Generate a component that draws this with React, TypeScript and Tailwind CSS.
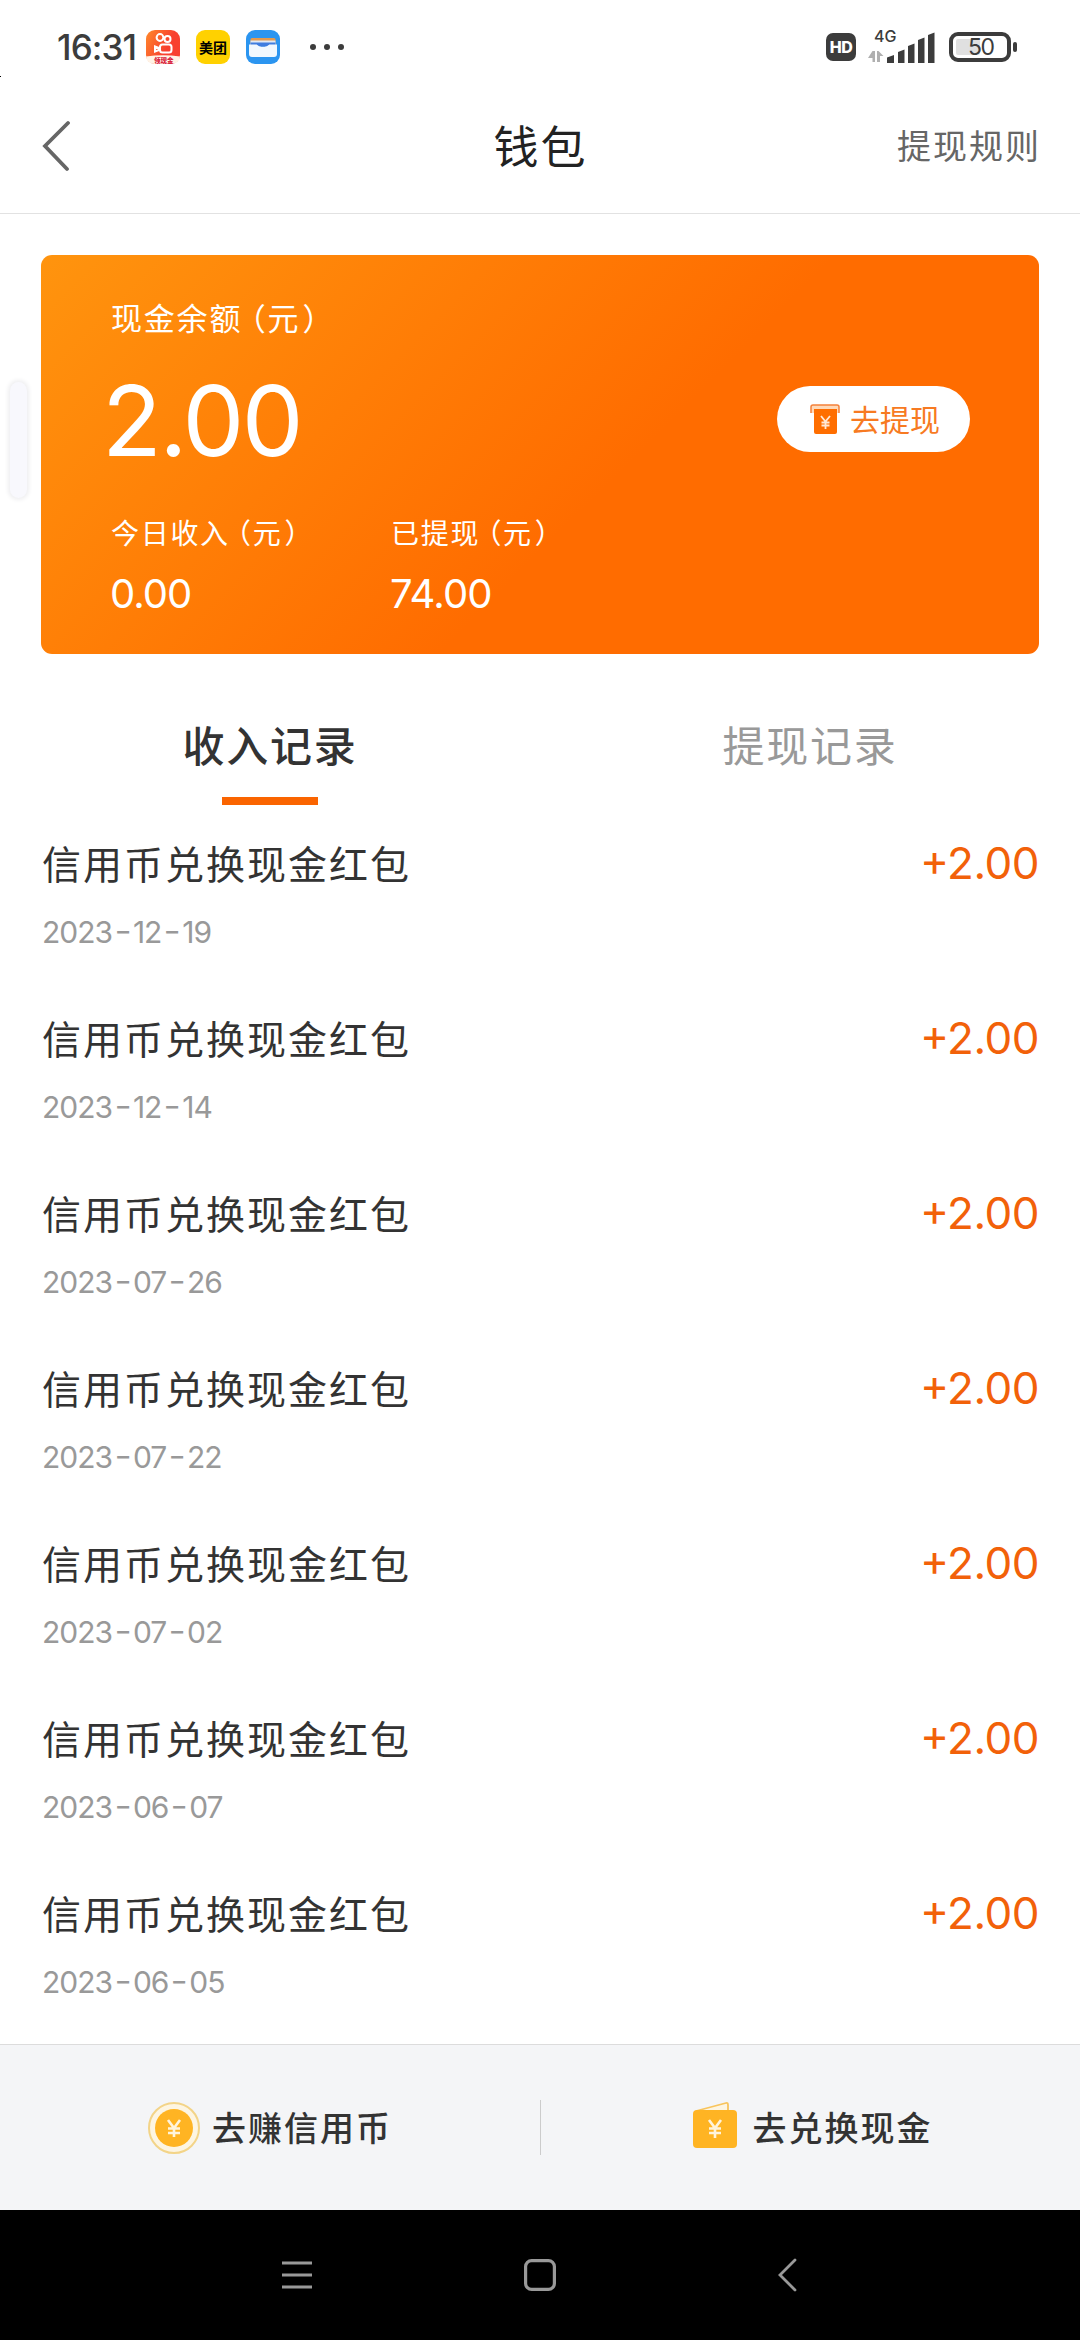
import { useState } from "react";

const records = [
  { id: 1, title: "信用币兑换现金红包", date: "2023-12-19", amount: "+2.00" },
  { id: 2, title: "信用币兑换现金红包", date: "2023-12-14", amount: "+2.00" },
  { id: 3, title: "信用币兑换现金红包", date: "2023-07-26", amount: "+2.00" },
  { id: 4, title: "信用币兑换现金红包", date: "2023-07-22", amount: "+2.00" },
  { id: 5, title: "信用币兑换现金红包", date: "2023-07-02", amount: "+2.00" },
  { id: 6, title: "信用币兑换现金红包", date: "2023-06-07", amount: "+2.00" },
  { id: 7, title: "信用币兑换现金红包", date: "2023-06-05", amount: "+2.00" },
];

function StatusBar() {
  return (
    <div className="flex h-[79px] items-start justify-between pl-[57px] pr-[63px] pt-[30px] text-[#3c3c3c]">
      <div className="flex items-center">
        <span className="w-[89px] font-[Inter,sans-serif] text-[35px] font-medium leading-[34px] tracking-[-0.900px]">16:31</span>
        <svg className="mr-4" width="34" height="34" viewBox="0 0 34 34">
          <defs>
            <linearGradient id="ks" x1="0" y1="0" x2="1" y2="0.5">
              <stop offset="0" stopColor="#ff8a2b" />
              <stop offset="0.7" stopColor="#f8402f" />
            </linearGradient>
          </defs>
          <rect width="34" height="34" rx="9" fill="url(#ks)" />
          <g fill="none" stroke="#fff" strokeWidth="2">
            <circle cx="14" cy="7.5" r="3.4" />
            <circle cx="21.5" cy="9" r="3" />
            <rect x="14" y="14.5" width="11.5" height="8" rx="2.5" />
            <path d="M9 16.500l4 1.500v2l-4 1.500z" />
          </g>
          <path d="M0 26.500Q17 24 34 26.500Q33 34 25 34H9Q1 34 0 26.500z" fill="#fff3e6" />
          <text x="8" y="32.500" fontSize="6.500" fontWeight="900" fill="#d8203a" fontFamily="Noto Sans CJK SC">领现金</text>
        </svg>
        <div className="mr-4 flex size-[34px] items-center justify-center rounded-[9px] bg-[#ffd100] text-[14px] font-bold leading-none text-black">美团</div>
        <svg width="34" height="34" viewBox="0 0 34 34">
          <rect width="34" height="34" rx="9" fill="#2b95f0" />
          <rect x="4.500" y="8" width="25" height="8" rx="1.500" fill="#e39a4f" />
          <rect x="4.500" y="10.500" width="25" height="6" fill="#dfe9f5" />
          <path d="M4.500 12.500h25v4h-25z" fill="#3f7ddf" />
          <path d="M3 14.500h7c2 0 2 2.500 7 2.500s5-2.500 7-2.500h7V24q0 3-3 3H6q-3 0-3-3z" fill="#f1f8fe" />
        </svg>
        <svg className="ml-[30px]" width="34" height="8" viewBox="0 0 34 8" fill="#3c3c3c">
          <circle cx="3" cy="4" r="3" />
          <circle cx="17" cy="4" r="3" />
          <circle cx="31" cy="4" r="3" />
        </svg>
      </div>
      <div className="flex h-[34px] items-center font-[Inter,sans-serif]">
        <div className="flex h-[28px] w-[30px] items-center justify-center rounded-[7px] bg-[#3c3c3c] text-[16px] font-extrabold leading-none tracking-[-0.5px] text-white">HD</div>
        <svg className="ml-[12px] overflow-visible" width="67" height="34" viewBox="0 0 67 34" fill="#3c3c3c">
          <text x="6" y="12" fontSize="16" fontWeight="500" fontFamily="Inter">4G</text>
          <path d="M4.500 21h2.500v11H4.500v-4H0zM9 21h1.500l5 5H12v6H9z" fill="#b0b0b0" />
          <path d="M19 27.500l7-2.500v8h-7zM30 22l6.500-2.500V33H30zM40 16l6.500-2.500V33H40zM50 10l6.500-2.500V33H50zM60 5l6.500-2.500V33H60z" strokeLinejoin="round" />
        </svg>
        <div className="ml-[14px] flex h-[30px] w-[62px] rounded-[9px] border-4 border-[#3c3c3c] p-[3px]">
          <div className="flex h-full w-[24px] justify-start rounded-[2px] bg-[#e0e0e0] pl-[12px] text-[23px] leading-[17px] tracking-[-1.500px]">50</div>
        </div>
        <div className="ml-[2px] h-[10px] w-[4px] rounded-[2px] bg-[#3c3c3c]" />
      </div>
    </div>
  );
}

// Half-width set brackets around the unit
function Unit() {
  return (
    <>
      <span className="ml-[0.26em] [font-feature-settings:'halt']">（</span>
      元
      <span className="ml-[0.07em] [font-feature-settings:'halt']">）</span>
    </>
  );
}

function RecordDate({ value }: { value: string }) {
  const [year, month, day] = value.split("-");
  return (
    <div className="mt-[36px] font-[Inter,sans-serif] text-[30px] leading-[30px] tracking-[-1px] text-[#999] [font-feature-settings:'case']">
      {year}
      <span className="mx-[4px] inline-block scale-x-125">-</span>
      {month}
      <span className="mx-[4px] inline-block scale-x-125">-</span>
      {day}
    </div>
  );
}

function WithdrawIcon() {
  return (
    <svg width="30" height="30" viewBox="0 0 30 30">
      <path d="M1 9V3Q1 1 3 1H27Q29 1 29 3V9" fill="#ffd9b8" stroke="#f5813a" strokeWidth="1.500" />
      <path d="M4 5H27V28Q27 30 25 30H6Q4 30 4 28z" fill="#ff6e00" />
      <path d="M11 12l4.500 5.500L20 12M15.500 17.500V25M11.500 18.500h8M11.500 21.500h8" fill="none" stroke="#ffe9d6" strokeWidth="1.800" />
    </svg>
  );
}

function CoinIcon() {
  return (
    <svg width="52" height="52" viewBox="0 0 52 52">
      <circle cx="26" cy="26" r="25" fill="#fdf5e2" stroke="#f3d488" strokeWidth="2" />
      <circle cx="26" cy="26" r="19" fill="#ffb423" />
      <path d="M20 18l6 8 6-8M26 26v9M20 26.500h12M20 31h12" fill="none" stroke="#fff4dc" strokeWidth="2.600" />
    </svg>
  );
}

function WalletIcon() {
  return (
    <svg width="52" height="52" viewBox="0 0 52 52">
      <path d="M7 9L37 1Q39 0.500 39 3V10" fill="#fdf5e2" stroke="#f8c45c" strokeWidth="1.800" />
      <rect x="4" y="8" width="44" height="38" rx="4" fill="#ffb423" />
      <path d="M20 18l6 8 6-8M26 26v10M20 26.500h12M20 31h12" fill="none" stroke="#fff4dc" strokeWidth="2.600" />
    </svg>
  );
}

export default function App() {
  const [tab, setTab] = useState("income");

  return (
    <div className="relative flex h-[2340px] w-[1080px] flex-col overflow-hidden bg-white font-['Noto_Sans_CJK_SC',sans-serif]">
      <StatusBar />

      <header className="flex h-[135px] items-center border-b border-[#e2e2e2] pl-[42px] pr-[41px]">
        <div className="flex-1">
          <svg width="28" height="52" viewBox="0 0 28 52" fill="none" stroke="#666" strokeWidth="3.800" strokeLinecap="round">
            <path d="M26 3L3 26L25 49" />
          </svg>
        </div>
        <h1 className="-mt-[2px] text-[45px] leading-[48px] tracking-[2px] text-[#222]">钱包</h1>
        <div className="-mt-[2px] flex-1 text-right text-[34px] leading-[36px] tracking-[2px] text-[#666]">
          <span className="-mr-[2px]">提现规则</span>
        </div>
      </header>

      <section className="mx-[41px] mt-[41px] h-[399px] rounded-[11px] bg-[linear-gradient(135deg,#ff940e_0%,#ff6c00_57%)] pl-[70px] pr-[69px] pt-[46px] text-white">
        <div className="text-[31px] leading-[32px] tracking-[1.800px]">现金余额<Unit /></div>
        <div className="mt-[48px] flex h-[80px] items-center justify-between">
          <span className="-ml-[9px] font-[Inter,sans-serif] text-[98px] leading-[80px] tracking-[-2.500px]">2.00</span>
          <button className="-mt-[4px] flex h-[66px] w-[193px] items-center rounded-full bg-white pl-[33px] text-[30px] leading-[30px] text-[#f77a22]">
            <WithdrawIcon />
            <span className="-mt-[3px] ml-[10px]">去提现</span>
          </button>
        </div>
        <div className="mt-[57px] flex">
          <div className="w-[280px]">
            <div className="text-[28px] leading-[28px] tracking-[1.700px]">今日收入<Unit /></div>
            <div className="-ml-px mt-[28px] font-[Inter,sans-serif] text-[40px] leading-[40px] tracking-[-1px]">0.00</div>
          </div>
          <div>
            <div className="text-[28px] leading-[28px] tracking-[1.700px]">已提现<Unit /></div>
            <div className="-ml-px mt-[28px] font-[Inter,sans-serif] text-[40px] leading-[40px] tracking-[-0.800px]">74.00</div>
          </div>
        </div>
      </section>

      <nav className="grid h-[151px] grid-cols-2 pt-[70px] text-[42px] leading-[40px] tracking-[1.800px]">
        <button className="flex flex-col items-center text-[#333]" onClick={() => setTab("income")}>
          <span className="font-medium">收入记录</span>
          {tab === "income" && <span className="mt-[33px] h-[8px] w-[96px] bg-[#fa6400]" />}
        </button>
        <button className="flex flex-col items-center text-[#999]" onClick={() => setTab("withdraw")}>
          <span>提现记录</span>
          {tab === "withdraw" && <span className="mt-[33px] h-[8px] w-[96px] bg-[#fa6400]" />}
        </button>
      </nav>

      <ul className="flex-1 pl-[42px] pr-[41px]">
        {records.map((r) => (
          <li key={r.id} className="flex h-[175px] justify-between pt-[38px]">
            <div>
              <div className="text-[39px] leading-[38px] tracking-[2px] text-[#333]">{r.title}</div>
              <RecordDate value={r.date} />
            </div>
            <div className="font-[Inter,sans-serif] text-[44px] leading-[40px] tracking-[-0.500px] text-[#f26109] [font-feature-settings:'case']">{r.amount}</div>
          </li>
        ))}
      </ul>

      <footer className="flex h-[166px] items-center border-t border-[#dcdcdc] bg-[#f4f5f7] text-[34px] font-medium leading-[36px] tracking-[2px] text-[#333]">
        <div className="flex flex-1 items-center gap-[12px] pl-[148px]">
          <CoinIcon />
          <span className="-mt-[2px]">去赚信用币</span>
        </div>
        <div className="h-[55px] w-px bg-[#ccc]" />
        <div className="flex flex-1 items-center gap-[12px] pl-[148px]">
          <WalletIcon />
          <span className="-mt-[2px]">去兑换现金</span>
        </div>
      </footer>

      <div className="flex h-[130px] items-center justify-between bg-black pl-[282px] pr-[283px]">
        <svg width="30" height="34" viewBox="0 0 30 34" stroke="#999" strokeWidth="3">
          <path d="M0 5h30M0 17h30M0 29h30" />
        </svg>
        <svg className="-ml-[10px]" width="32" height="34" viewBox="0 0 32 34" fill="none" stroke="#999" strokeWidth="3.200">
          <rect x="1.600" y="2.600" width="28.800" height="28.800" rx="6" />
        </svg>
        <svg width="19" height="34" viewBox="0 0 19 34" fill="none" stroke="#999" strokeWidth="2.800" strokeLinecap="round">
          <path d="M17 2L2 17L17 32" />
        </svg>
      </div>

      {/* Edge gesture handle floating over the page */}
      <div className="absolute left-[10px] top-[382px] h-[116px] w-[17px] rounded-full bg-[#f8f8fd] shadow-[0_0_4px_2px_#eeeef0]" />
      <div className="absolute left-0 top-[76px] h-px w-px bg-black" />
    </div>
  );
}
